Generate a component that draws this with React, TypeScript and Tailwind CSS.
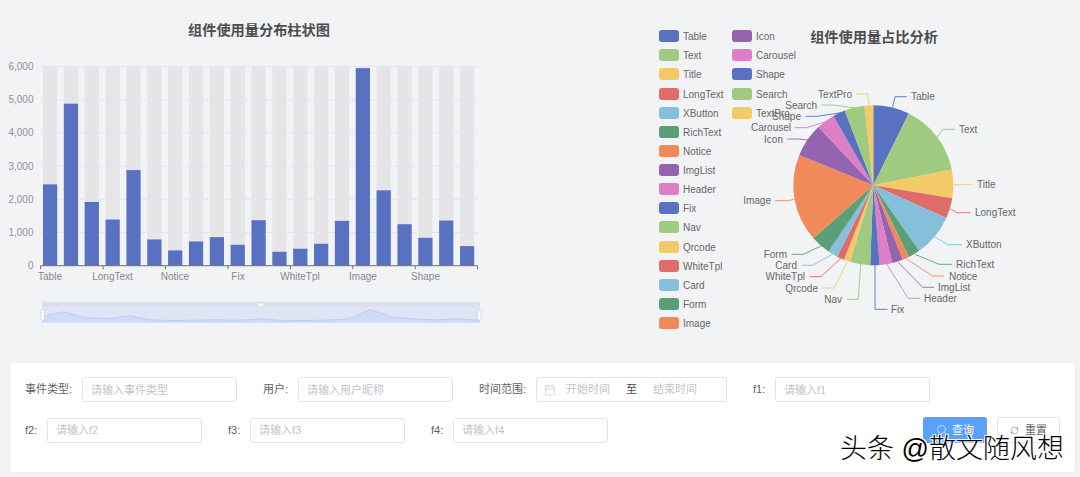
import React from "react";
import { Search, RefreshCw, Calendar } from "lucide-react";

const C = ["#5871c1", "#a0ca7f", "#f4c968", "#e06c6a", "#85bfdc", "#5aa077", "#f08a5a", "#9464ae", "#dd7fc7"];

type S = { n: string; v: number; p: number[]; tx: number; a: "start" | "end" };
const D: S[] = [
  { n: "Table", v: 2450, p: [892.7, 106.7, 895, 96.7, 906.7, 96.7], tx: 911, a: "start" },
  { n: "Text", v: 4880, p: [936.7, 138.3, 942.7, 129.3, 955, 129.3], tx: 959, a: "start" },
  { n: "Title", v: 1920, p: [953.3, 184.7, 972.7, 184.7], tx: 977, a: "start" },
  { n: "LongText", v: 1390, p: [949.3, 208.3, 956.7, 212.7, 970.7, 212.7], tx: 975, a: "start" },
  { n: "XButton", v: 2880, p: [935, 237.3, 948.3, 244.7, 961.7, 244.7], tx: 966, a: "start" },
  { n: "RichText", v: 790, p: [915, 254.3, 939, 264.3, 951.7, 264.3], tx: 956, a: "start" },
  { n: "Notice", v: 460, p: [906.7, 259, 932.7, 276, 944, 276], tx: 949, a: "start" },
  { n: "ImgList", v: 730, p: [897.7, 261.7, 922.7, 287.3, 934, 287.3], tx: 938, a: "start" },
  { n: "Header", v: 860, p: [886.7, 264, 908.3, 298.3, 920, 298.3], tx: 924, a: "start" },
  { n: "Fix", v: 630, p: [875, 265, 875, 309.3, 887.3, 309.3], tx: 891, a: "start" },
  { n: "Nav", v: 1370, p: [860.7, 264, 858.3, 299.3, 846.7, 299.3], tx: 842, a: "end" },
  { n: "Qrcode", v: 420, p: [847.3, 261.7, 834.3, 288, 822.3, 288], tx: 818, a: "end" },
  { n: "WhiteTpl", v: 510, p: [840.7, 258.3, 821, 276.7, 809.3, 276.7], tx: 805, a: "end" },
  { n: "Card", v: 660, p: [832.7, 254, 812.7, 265.3, 801.7, 265.3], tx: 797, a: "end" },
  { n: "Form", v: 1350, p: [821.7, 245.7, 803.3, 254.3, 791.7, 254.3], tx: 787, a: "end" },
  { n: "Image", v: 5950, p: [794, 199.3, 788.3, 200.7, 775, 200.7], tx: 771, a: "end" },
  { n: "Icon", v: 2270, p: [808.3, 140, 798.3, 139, 787.3, 139], tx: 783, a: "end" },
  { n: "Carousel", v: 1250, p: [826, 121.7, 806.7, 127.7, 795, 127.7], tx: 791, a: "end" },
  { n: "Shape", v: 840, p: [841, 112.7, 817.3, 116.3, 805.7, 116.3], tx: 801, a: "end" },
  { n: "Search", v: 1360, p: [855, 108, 833.3, 105, 821, 105], tx: 817, a: "end" },
  { n: "TextPro", v: 590, p: [869.3, 105.3, 867.3, 94, 856.7, 94], tx: 852, a: "end" },
];

const Y0 = 265.7;
const UNIT = 33.2;
const bx = (i: number) => 43 + i * 20.85;

function BarChart() {
  const zx = (i: number) => 42 + (i / 20) * 438;
  const zy = (v: number) => 321.5 - v * 0.002;
  const line = D.map((d, i) => `${zx(i)},${zy(d.v)}`).join(" ");
  return (
    <svg viewBox="0 50 518 290" className="w-[518px] h-[290px] mt-[11px]">
      {[0, 1, 2, 3, 4, 5, 6].map((k) => (
        <g key={k}>
          {k > 0 && <line x1="40.6" x2="477.6" y1={Y0 - k * UNIT} y2={Y0 - k * UNIT} stroke="#e0e6f1" />}
          <text x="33.5" y={Y0 - k * UNIT + 3.5} textAnchor="end" fontSize="10" fill="#909299">
            {k === 0 ? "0" : `${k},000`}
          </text>
        </g>
      ))}
      {D.map((d, i) => (
        <g key={d.n}>
          <rect x={bx(i)} y={66.5} width="14.2" height={Y0 - 66.5} fill="#e5e5e8" />
          <rect x={bx(i)} y={Y0 - (d.v / 1000) * UNIT} width="14.2" height={(d.v / 1000) * UNIT} fill="#5871c1" />
        </g>
      ))}
      <line x1="40.6" x2="477.6" y1={Y0} y2={Y0} stroke="#6e7079" />
      {[0, 1, 2, 3, 4, 5, 6, 7].map((k) => {
        const x = 40.6 + (k * 437) / 7;
        return <line key={k} x1={x} x2={x} y1={Y0} y2={Y0 + 3.5} stroke="#6e7079" />;
      })}
      {[
        ["Table", 50],
        ["LongText", 112.5],
        ["Notice", 175],
        ["Fix", 238],
        ["WhiteTpl", 300],
        ["Image", 363],
        ["Shape", 425.5],
      ].map(([t, x]) => (
        <text key={t as string} x={x as number} y="280.2" textAnchor="middle" fontSize="10" fill="#85878e">
          {t}
        </text>
      ))}
      <rect x="42" y="301.7" width="438" height="5.6" fill="#d9e0f0" />
      <rect x="42" y="307.3" width="438" height="15.4" fill="#dfe5f4" />
      <polygon points={`42,322.7 ${line} 480,322.7`} fill="#cfdaf6" />
      <polyline points={line} fill="none" stroke="#b4c6f4" strokeWidth="0.8" />
      <rect x="258.5" y="303.7" width="4.5" height="2.2" fill="#ffffff" />
      <rect x="41" y="310" width="3.4" height="10" rx="1" fill="#fff" stroke="#b9c4dc" strokeWidth="0.6" />
      <rect x="477.7" y="310" width="3.4" height="10" rx="1" fill="#fff" stroke="#b9c4dc" strokeWidth="0.6" />
    </svg>
  );
}

function PieChart() {
  const cx = 873.3;
  const cy = 185.3;
  const r = 80;
  const total = D.reduce((s, d) => s + d.v, 0);
  let acc = 0;
  const slices = D.map((d, i) => {
    const a0 = (acc / total) * 2 * Math.PI - Math.PI / 2;
    acc += d.v;
    const a1 = (acc / total) * 2 * Math.PI - Math.PI / 2;
    const large = a1 - a0 > Math.PI ? 1 : 0;
    const path = `M${cx} ${cy}L${cx + r * Math.cos(a0)} ${cy + r * Math.sin(a0)}A${r} ${r} 0 ${large} 1 ${cx + r * Math.cos(a1)} ${cy + r * Math.sin(a1)}Z`;
    return { path, color: C[i % C.length] };
  });
  return (
    <svg viewBox="732 46 284 300" className="w-[284px] h-[300px]">
      {slices.map((s, i) => (
        <path key={i} d={s.path} fill={s.color} />
      ))}
      {D.map((d, i) => {
        const pts = [];
        for (let k = 0; k < d.p.length; k += 2) pts.push(`${d.p[k]},${d.p[k + 1]}`);
        const last = d.p[d.p.length - 1];
        return (
          <g key={d.n}>
            <polyline points={pts.join(" ")} fill="none" stroke={C[i % C.length]} strokeWidth="0.9" />
            <text x={d.tx} y={last + 3.6} textAnchor={d.a} fontSize="10" fill="#666666">
              {d.n}
            </text>
          </g>
        );
      })}
    </svg>
  );
}

function LegendCol({ from, to, w }: { from: number; to: number; w: string }) {
  return (
    <div className={`flex flex-col ${w}`}>
      {D.slice(from, to).map((d, i) => (
        <div key={d.n} className="flex items-center h-[19.13px] text-[10px] text-[#666666]">
          <span
            className="w-[20px] h-[12px] rounded-[3px] mr-[4px] shrink-0"
            style={{ backgroundColor: C[(from + i) % C.length] }}
          />
          <span className="whitespace-nowrap pt-px">{d.n}</span>
        </div>
      ))}
    </div>
  );
}

const inputCls =
  "w-[155px] h-[25px] rounded-[3px] border border-[#e2e4ea] bg-white px-[8px] text-[11px] text-[#606266] outline-none placeholder:text-[#c0c4cc]";

function Field({ label, ph, lw }: { label: string; ph: string; lw: string }) {
  return (
    <div className="flex items-center">
      <span className={`${lw} mr-[10px] text-[11px] text-[#606266] whitespace-nowrap`}>{label}</span>
      <input className={inputCls} placeholder={ph} readOnly />
    </div>
  );
}

export default function App() {
  return (
    <div className="w-[1080px] h-[477px] overflow-hidden bg-[#f2f3f5] font-['Liberation_Sans','Noto_Sans_CJK_SC',sans-serif]">
      <div className="flex h-[362px]">
        <section className="w-[518px] flex flex-col">
          <h2 className="pt-[21px] h-[39px] leading-[18px] text-center text-[14.2px] font-semibold text-[#4d4d4d]">
            组件使用量分布柱状图
          </h2>
          <BarChart />
        </section>
        <section className="flex pl-[141px]">
          <div className="flex pt-[26.6px] w-[153px] shrink-0">
            <LegendCol from={0} to={16} w="w-[73px]" />
            <LegendCol from={16} to={21} w="w-[80px]" />
          </div>
          <div className="ml-[-80px] w-[284px] shrink-0">
            <h2 className="pt-[28px] h-[46px] leading-[18px] text-center text-[14.2px] font-semibold text-[#4d4d4d]">
              组件使用量占比分析
            </h2>
            <PieChart />
          </div>
        </section>
      </div>

      <div className="relative ml-[9px] w-[1067px] h-[111px] rounded-[3px] border border-[#ebedf1] bg-white px-[15px] pt-[14px]">
        <div className="flex gap-x-[26px]">
          <Field label="事件类型:" ph="请输入事件类型" lw="w-[47px]" />
          <Field label="用户:" ph="请输入用户昵称" lw="w-[25px]" />
          <div className="flex items-center">
            <span className="w-[47px] mr-[10px] text-[11px] text-[#606266] whitespace-nowrap">时间范围:</span>
            <div className="flex items-center w-[191px] h-[25px] rounded-[3px] border border-[#e2e4ea] pl-[7px] text-[11px]">
              <Calendar size={12} strokeWidth={1} className="text-[#b4b7bd] shrink-0" />
              <input className="ml-[10px] w-[44px] outline-none placeholder:text-[#c0c4cc]" placeholder="开始时间" readOnly />
              <span className="ml-[16px] text-[#4a4a4a]">至</span>
              <input className="ml-[16px] w-[44px] outline-none placeholder:text-[#c0c4cc]" placeholder="结束时间" readOnly />
            </div>
          </div>
          <Field label="f1:" ph="请输入f1" lw="w-[12px]" />
        </div>
        <div className="mt-[15px] flex items-center gap-x-[26px]">
          <Field label="f2:" ph="请输入f2" lw="w-[12px]" />
          <Field label="f3:" ph="请输入f3" lw="w-[12px]" />
          <Field label="f4:" ph="请输入f4" lw="w-[12px]" />
          <div className="ml-auto flex gap-x-[10px]">
            <button className="flex items-center justify-center gap-[4px] w-[64px] h-[26px] rounded-[3px] bg-[#5ba0fb] text-[11px] text-white">
              <Search size={12} strokeWidth={1.2} />
              查询
            </button>
            <button className="flex items-center justify-center gap-[6px] w-[63px] h-[26px] rounded-[3px] border border-[#e2e4ea] bg-white text-[11px] text-[#606266]">
              <RefreshCw size={9} strokeWidth={1.3} />
              重置
            </button>
          </div>
        </div>
        <div className="absolute left-[830px] top-[70px] whitespace-nowrap text-[27px] leading-[32px] font-light text-black [text-shadow:1px_1px_0_#ffffff,-1px_-1px_0_#ffffff,1px_-1px_0_#ffffff,-1px_1px_0_#ffffff]">
          头条 @散文随风想
        </div>
      </div>
    </div>
  );
}
